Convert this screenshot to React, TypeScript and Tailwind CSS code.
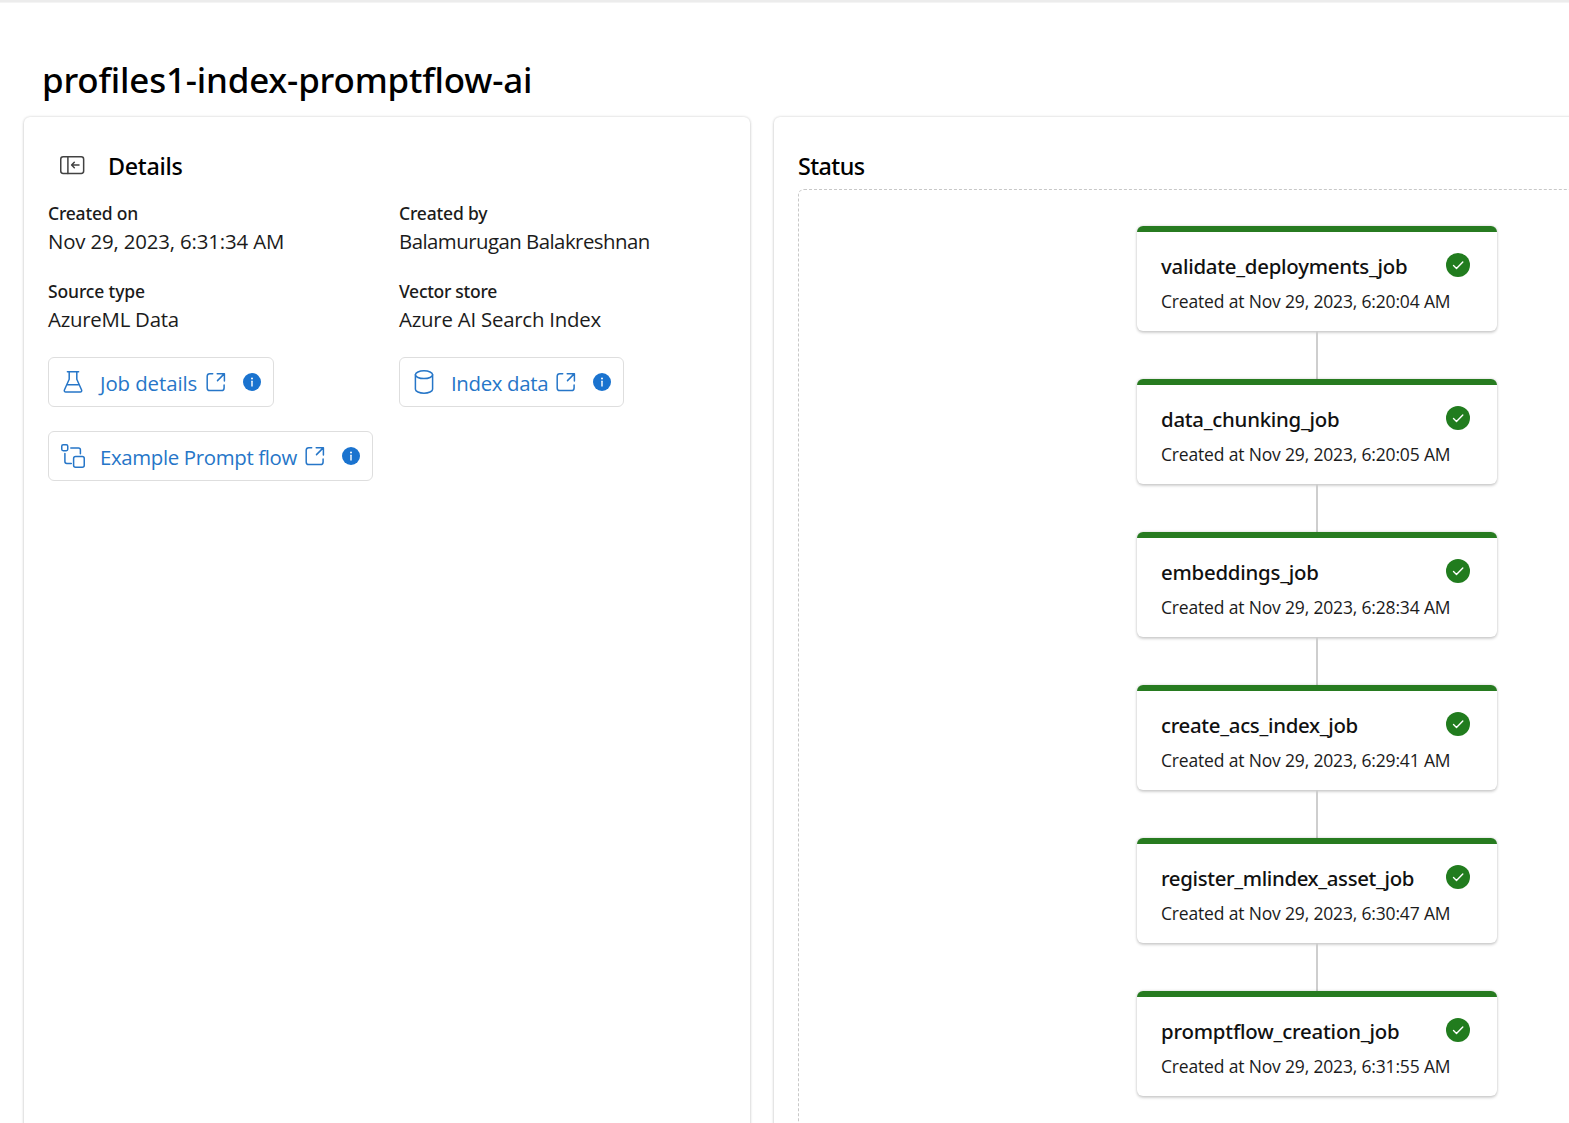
import type { ReactNode } from "react";

const jobs = [
  { name: "validate_deployments_job", time: "6:20:04", tracking: "tracking-[-0.25px]" },
  { name: "data_chunking_job", time: "6:20:05", tracking: "tracking-[-0.26px]" },
  { name: "embeddings_job", time: "6:28:34", tracking: "tracking-[-0.23px]" },
  { name: "create_acs_index_job", time: "6:29:41", tracking: "tracking-[-0.31px]" },
  { name: "register_mlindex_asset_job", time: "6:30:47", tracking: "tracking-[-0.36px]" },
  { name: "promptflow_creation_job", time: "6:31:55", tracking: "tracking-[-0.19px]" },
];

const fields = [
  { label: "Created on", value: "Nov 29, 2023, 6:31:34 AM", lt: "tracking-[-0.2px]", vt: "tracking-[-0.15px]" },
  { label: "Created by", value: "Balamurugan Balakreshnan", lt: "tracking-[-0.18px]", vt: "tracking-[-0.53px]" },
  { label: "Source type", value: "AzureML Data", lt: "tracking-[-0.13px]", vt: "tracking-[-0.24px]" },
  { label: "Vector store", value: "Azure AI Search Index", lt: "tracking-[-0.29px]", vt: "tracking-[-0.22px]" },
];

const line = {
  width: 24,
  height: 24,
  viewBox: "0 0 24 24",
  fill: "none",
  stroke: "currentColor",
  strokeWidth: 1.5,
  strokeLinecap: "round" as const,
  strokeLinejoin: "round" as const,
};

function PanelIcon() {
  return (
    <svg {...line} width={26} viewBox="-1 0 26 24" className="-mx-px text-[#424242]">
      <rect x="0.75" y="3.75" width="22.9" height="16.7" rx="2.4" />
      <path d="M7.9 3.75v16.7M19 12h-7M14.3 9.3 11.6 12l2.7 2.7" />
    </svg>
  );
}

function BeakerIcon() {
  return (
    <svg {...line}>
      <path d="M6.4 1.8h11.2M8.2 1.8v7.4L3.4 20c-.4 1 .2 2 1.3 2h14.6c1.1 0 1.7-1 1.3-2L15.8 9.2V1.800M5.9 14.8h12.2" />
    </svg>
  );
}

function FlowIcon() {
  return (
    <svg {...line}>
      <rect x="0.75" y="0.75" width="6" height="6" rx="1.4" />
      <rect x="12.6" y="12.6" width="10.65" height="10.65" rx="2" />
      <path d="M9.8 3.9h7.700c1.1 0 1.900.8 1.900 1.900v4M3.900 9.600v8c0 1.100.8 1.900 1.900 1.900h4.500" />
    </svg>
  );
}

function CylinderIcon() {
  return (
    <svg {...line}>
      <ellipse cx="12" cy="4.7" rx="8.6" ry="3.9" />
      <path d="M3.4 4.7v14.6c0 2.15 3.85 3.9 8.6 3.9s8.6-1.75 8.6-3.9V4.7" />
    </svg>
  );
}

function OpenIcon() {
  return (
    <svg {...line} className="shrink-0">
      <path d="M8.7 3.7H5.8A2.6 2.6 0 0 0 3.2 6.3v11.6a2.6 2.6 0 0 0 2.6 2.6h11.7a2.6 2.6 0 0 0 2.6-2.6v-2.8M13.2 3.7h7.2v7.2M20.2 3.9l-6.7 6.7" />
    </svg>
  );
}

function InfoIcon() {
  return (
    <svg width={24} height={24} viewBox="0 0 24 24" className="shrink-0">
      <circle cx="12" cy="12" r="9" fill="#1a73cf" />
      <circle cx="12" cy="8.6" r="1" fill="#fff" />
      <path d="M12 11.3v4.7" stroke="#fff" strokeWidth="1.4" strokeLinecap="round" />
    </svg>
  );
}

function CheckIcon() {
  return (
    <svg width={24} height={24} viewBox="0 0 24 24" className="mt-[3px] shrink-0">
      <circle cx="12" cy="12" r="12" fill="#217c1e" />
      <path d="m7.500 12.500 3 3 6.300-6.500" fill="none" stroke="#fff" strokeWidth="1.4" strokeLinecap="round" strokeLinejoin="round" />
    </svg>
  );
}

function LinkButton({ icon, size, children }: { icon: ReactNode; size: string; children: ReactNode }) {
  return (
    <a className={`flex h-[50px] items-center rounded-md border border-[#dedede] pr-[9px] pl-3 text-[20.4px] text-[#2676c8] ${size}`}>
      {icon}
      {children}
      <span className="ml-auto flex gap-3">
        <OpenIcon />
        <InfoIcon />
      </span>
    </a>
  );
}

const panel = "shrink-0 rounded-md bg-white p-6 shadow-[0_0_3px_rgba(0,0,0,0.16),0_1px_3px_rgba(0,0,0,0.14)]";

export default function App() {
  return (
    <main className="flex h-[1123px] w-[1569px] flex-col overflow-hidden bg-white font-['Open_Sans','Noto_Sans',sans-serif] text-[#1b1b1b]">
      <div className="h-[3px] shrink-0 border-b border-[#f4f4f4] bg-[#ececec]" />
      <h1 className="mt-[53px] mb-[13px] h-12 shrink-0 pl-[42px] font-['Noto_Sans',sans-serif] text-[34.9px] leading-[48px] font-medium tracking-[-0.17px] text-black">
        profiles1-index-promptflow-ai
      </h1>
      <div className="flex shrink-0 gap-6 pl-6">
        <section className={`h-[1060px] w-[726px] ${panel}`}>
          <header className="flex h-12 items-center gap-6 pl-3">
            <PanelIcon />
            <h2 className="pt-0.5 font-['Noto_Sans',sans-serif] text-[23.3px] font-medium tracking-[-0.27px] text-black">Details</h2>
          </header>
          <dl className="mt-3 grid grid-cols-[327px_327px] gap-x-6">
            {fields.map((f) => (
              <div key={f.label} className="h-[78px] whitespace-nowrap">
                <dt className={`font-['Noto_Sans',sans-serif] text-[17.5px] leading-6 font-medium ${f.lt}`}>{f.label}</dt>
                <dd className={`text-[20.4px] leading-8 ${f.vt}`}>{f.value}</dd>
              </div>
            ))}
          </dl>
          <div className="grid grid-cols-[327px_327px] gap-6">
            <LinkButton icon={<BeakerIcon />} size="w-[226px]">
              <span className="ml-[15px] pt-0.5 tracking-[-0.08px]">Job details</span>
            </LinkButton>
            <LinkButton icon={<CylinderIcon />} size="w-[225px]">
              <span className="ml-[15px] pt-0.5 tracking-[-0.33px]">Index data</span>
            </LinkButton>
            <LinkButton icon={<FlowIcon />} size="w-[325px]">
              <span className="ml-[15px] pt-0.5 tracking-[-0.34px]">Example Prompt flow</span>
            </LinkButton>
          </div>
        </section>
        <section className={`h-[1060px] w-[1086px] ${panel}`}>
          <h2 className="h-12 pt-px font-['Noto_Sans',sans-serif] text-[23.3px] leading-[48px] font-medium tracking-[-0.57px] text-black">Status</h2>
          <div className="flex h-[980px] flex-col items-center rounded-md border border-dashed border-[#c8c8c8] pt-9">
            {jobs.map((job, i) => (
              <div key={job.name} className="flex flex-col items-center">
                {i > 0 && <div className="h-12 w-0.5 bg-[#cecece]" />}
                <article className="h-[105px] w-[360px] overflow-hidden rounded-md bg-white shadow-[0_0_3px_rgba(0,0,0,0.14),0_1.5px_3px_rgba(0,0,0,0.16)]">
                  <div className="h-1.5 bg-[#277b20]" />
                  <div className="flex h-[50px] justify-between pt-[18px] pr-[27px] pl-6">
                    <h3 className={`font-['Noto_Sans',sans-serif] text-[20.4px] leading-8 font-medium text-[#111] ${job.tracking}`}>{job.name}</h3>
                    <CheckIcon />
                  </div>
                  <p className="mt-[7px] pl-6 text-[17.5px] leading-6 tracking-[-0.17px] whitespace-nowrap">Created at Nov 29, 2023, {job.time} AM</p>
                </article>
              </div>
            ))}
          </div>
        </section>
      </div>
    </main>
  );
}
